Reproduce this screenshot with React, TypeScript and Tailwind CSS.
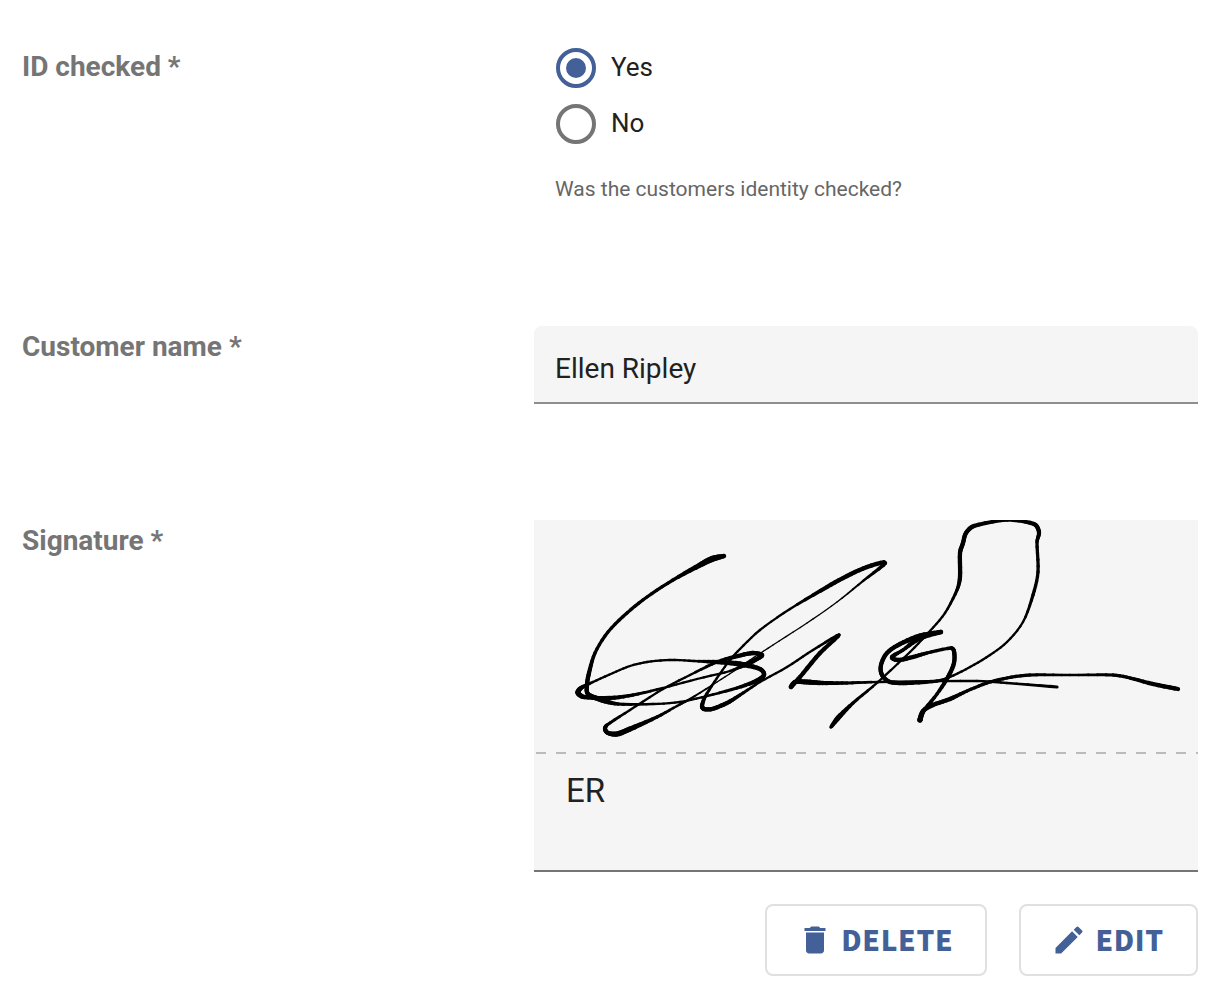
import { useState } from 'react';
import type { ReactNode } from 'react';
import { MdDelete, MdEdit } from 'react-icons/md';

// x, y, pen width
type PenPoint = [number, number, number];

const STROKES: PenPoint[][] = [
    [
        [190, 36, 4], [178, 39, 6], [166, 45, 5], [139, 60, 3], [113, 77, 3], [93, 93, 3], [74, 112, 3],
        [61, 133, 3], [55, 153, 4], [53, 165, 4], [54, 174, 4], [68, 180, 5], [84, 184, 3], [119, 184, 2],
        [146, 182, 2], [173, 176, 2], [203, 168, 3], [222, 161, 4], [230, 155, 4], [226, 149, 4], [206, 144, 5],
        [183, 142, 4], [160, 141, 2], [136, 140, 2], [113, 142, 2], [96, 146, 2], [79, 153, 2], [59, 162, 2],
        [47, 168, 4], [44, 173, 5], [50, 177, 4], [76, 178, 4], [99, 175, 3], [129, 168, 2], [163, 159, 2],
        [196, 151, 2], [213, 144, 4], [223, 139, 4], [228, 135, 4], [219, 133, 4], [204, 136, 4], [183, 142, 3],
        [156, 155, 2], [129, 169, 2], [96, 190, 2], [73, 205, 3], [71, 209, 4], [74, 213, 4], [83, 214, 5],
        [96, 209, 5], [123, 197, 3], [143, 186, 2], [156, 179, 2], [183, 162, 1], [203, 149, 1], [216, 140, 1],
        [239, 125, 1], [273, 103, 1], [303, 82, 1], [329, 61, 2], [351, 43, 4], [333, 47, 4], [313, 56, 4],
        [293, 67, 4], [256, 89, 2], [226, 110, 2], [206, 129, 2], [196, 140, 2], [183, 158, 2], [171, 177, 3],
        [168, 186, 4], [170, 189, 4], [178, 189, 4], [193, 183, 4], [206, 175, 3], [226, 162, 2], [253, 147, 2],
        [279, 130, 2], [305, 115, 3], [286, 133, 4], [266, 157, 4], [257, 167, 4], [261, 162, 4], [273, 162, 5],
        [289, 163, 4], [313, 163, 3], [344, 162, 2], [443, 161, 2], [473, 163, 2], [523, 167, 3],
    ],
    [
        [407, 112, 4], [386, 116, 5], [366, 124, 4], [353, 133, 4], [347, 145, 4], [348, 155, 4], [356, 162, 4],
        [373, 163, 4], [403, 161, 3], [416, 157, 2], [436, 147, 2], [456, 135, 2], [473, 122, 2], [489, 102, 2],
        [499, 75, 3], [504, 52, 3], [503, 22, 3], [505, 12, 4], [500, 4, 4], [473, 0, 3], [440, 6, 4],
        [432, 13, 4], [429, 23, 4], [426, 33, 4], [426, 57, 4], [423, 70, 3], [411, 93, 2], [396, 111, 2],
        [376, 132, 2], [344, 162, 2], [319, 183, 3], [304, 198, 5], [297, 207, 3],
    ],
    [
        [407, 112, 4], [386, 118, 5], [369, 130, 3], [358, 137, 4], [364, 140, 4], [379, 137, 4], [393, 133, 3],
        [417, 128, 3], [420, 131, 4], [420, 143, 4], [414, 157, 4], [403, 174, 3], [389, 192, 4], [386, 200, 5],
        [389, 191, 4], [399, 185, 4], [416, 179, 4], [433, 171, 3], [453, 163, 3], [473, 158, 3], [496, 155, 3],
        [536, 155, 2], [579, 155, 3], [596, 158, 3], [619, 164, 4], [644, 169, 4],
    ],
];

// Catmull-Rom through the pen points, one short piece per step so the width can change
function penSegments(points: PenPoint[], steps = 5) {
    const segments: { d: string; width: number }[] = [];
    for (let i = 0; i < points.length - 1; i++) {
        const p0 = points[Math.max(i - 1, 0)];
        const p1 = points[i];
        const p2 = points[i + 1];
        const p3 = points[Math.min(i + 2, points.length - 1)];
        const len = Math.hypot(p2[0] - p1[0], p2[1] - p1[1]);
        const tangent = (a: PenPoint, b: PenPoint, axis: 0 | 1) => {
            const span = Math.hypot(b[0] - a[0], b[1] - a[1]) || 1;
            const v = (b[axis] - a[axis]) / 2;
            return v * Math.min(1, (2 * len) / span);
        };
        const at = (t: number, axis: 0 | 1) => {
            const t2 = t * t;
            const t3 = t2 * t;
            return (
                (2 * t3 - 3 * t2 + 1) * p1[axis] +
                (t3 - 2 * t2 + t) * tangent(p0, p2, axis) +
                (3 * t2 - 2 * t3) * p2[axis] +
                (t3 - t2) * tangent(p1, p3, axis)
            );
        };
        for (let s = 0; s < steps; s++) {
            const a = s / steps;
            const b = (s + 1) / steps;
            segments.push({
                d: `M${at(a, 0).toFixed(2)} ${at(a, 1).toFixed(2)}L${at(b, 0).toFixed(2)} ${at(b, 1).toFixed(2)}`,
                width: p1[2] + (p2[2] - p1[2]) * ((a + b) / 2) + 0.3,
            });
        }
    }
    return segments;
}

const SIGNATURE = STROKES.flatMap((stroke) => penSegments(stroke));

function Signature() {
    return (
        <svg viewBox="0 0 664 234" className="block w-full" role="img" aria-label="Signature">
            <g stroke="#000" strokeLinecap="round" fill="none">
                {SIGNATURE.map((segment, index) => (
                    <path key={index} d={segment.d} strokeWidth={segment.width} />
                ))}
            </g>
            <line x1="2" y1="233" x2="664" y2="233" stroke="#bbb" strokeWidth="2" strokeDasharray="10 10" />
        </svg>
    );
}

interface RowProps {
    label: string;
    id?: string;
    htmlFor?: string;
    children: ReactNode;
}

function Row({ label, id, htmlFor, children }: RowProps) {
    const text = 'pt-[5px] text-[28px] leading-8 font-bold text-[#757575]';
    return (
        <div className="grid grid-cols-[512fr_664fr] items-start">
            {htmlFor ? (
                <label htmlFor={htmlFor} className={text}>{label}</label>
            ) : (
                <div id={id} className={text}>{label}</div>
            )}
            <div className="min-w-0">{children}</div>
        </div>
    );
}

function ActionButton({ icon, children }: { icon: ReactNode; children: ReactNode }) {
    return (
        <button
            type="button"
            className="flex h-[72px] items-center gap-2 rounded-lg border-2 border-[#e0e0e0] pr-8 pl-[30px] font-['Noto_Sans_CJK_SC',sans-serif] text-[28px] leading-8 font-black tracking-wide text-[#446098]"
        >
            {icon}
            <span className="pb-[3px]">{children}</span>
        </button>
    );
}

export default function App() {
    const [checked, setChecked] = useState('Yes');
    const [name, setName] = useState('Ellen Ripley');

    return (
        <main className="min-h-screen bg-white pt-[46px] pr-[26px] pb-[30px] pl-[22px] font-[Roboto,sans-serif] text-[#212121]">
            <form className="flex flex-col">
                {/* ID check */}
                <Row label="ID checked *" id="id-checked-label">
                    <div role="radiogroup" aria-labelledby="id-checked-label" className="flex flex-col gap-4 pt-[2px] pl-[22px]">
                        {['Yes', 'No'].map((option) => (
                            <label key={option} className="flex h-10 items-center gap-[15px] text-[26px]">
                                <input
                                    type="radio"
                                    name="id-checked"
                                    value={option}
                                    checked={checked === option}
                                    onChange={() => setChecked(option)}
                                    className="grid size-10 appearance-none place-content-center rounded-full border-4 border-[#757575] before:size-5 before:rounded-full checked:border-[#446098] checked:before:bg-[#446098]"
                                />
                                <span className="pb-[2px]">{option}</span>
                            </label>
                        ))}
                    </div>
                    <p className="pt-[33px] pl-[21px] text-[21px] leading-6 text-[#666]">Was the customers identity checked?</p>
                </Row>

                {/* Customer name */}
                <div className="pt-[125px]">
                    <Row label="Customer name *" htmlFor="customer-name">
                        <input
                            id="customer-name"
                            type="text"
                            value={name}
                            onChange={(e) => setName(e.target.value)}
                            className="block h-[78px] w-full rounded-t-lg border-b-2 border-[#8e8e8e] bg-[#f5f5f5] px-[21px] pt-2 text-[28px] outline-none"
                        />
                    </Row>
                </div>

                {/* Signature */}
                <div className="pt-[116px]">
                    <Row label="Signature *">
                        <div className="border-b-2 border-[#757575] bg-[#f5f5f5]">
                            <Signature />
                            <p className="px-8 pt-4 pb-[58px] text-[33px] leading-[42px]">ER</p>
                        </div>
                        <div className="flex justify-end gap-8 pt-8">
                            <ActionButton icon={<MdDelete className="size-9" />}>DELETE</ActionButton>
                            <ActionButton icon={<MdEdit className="size-9" />}>EDIT</ActionButton>
                        </div>
                    </Row>
                </div>
            </form>
        </main>
    );
}
